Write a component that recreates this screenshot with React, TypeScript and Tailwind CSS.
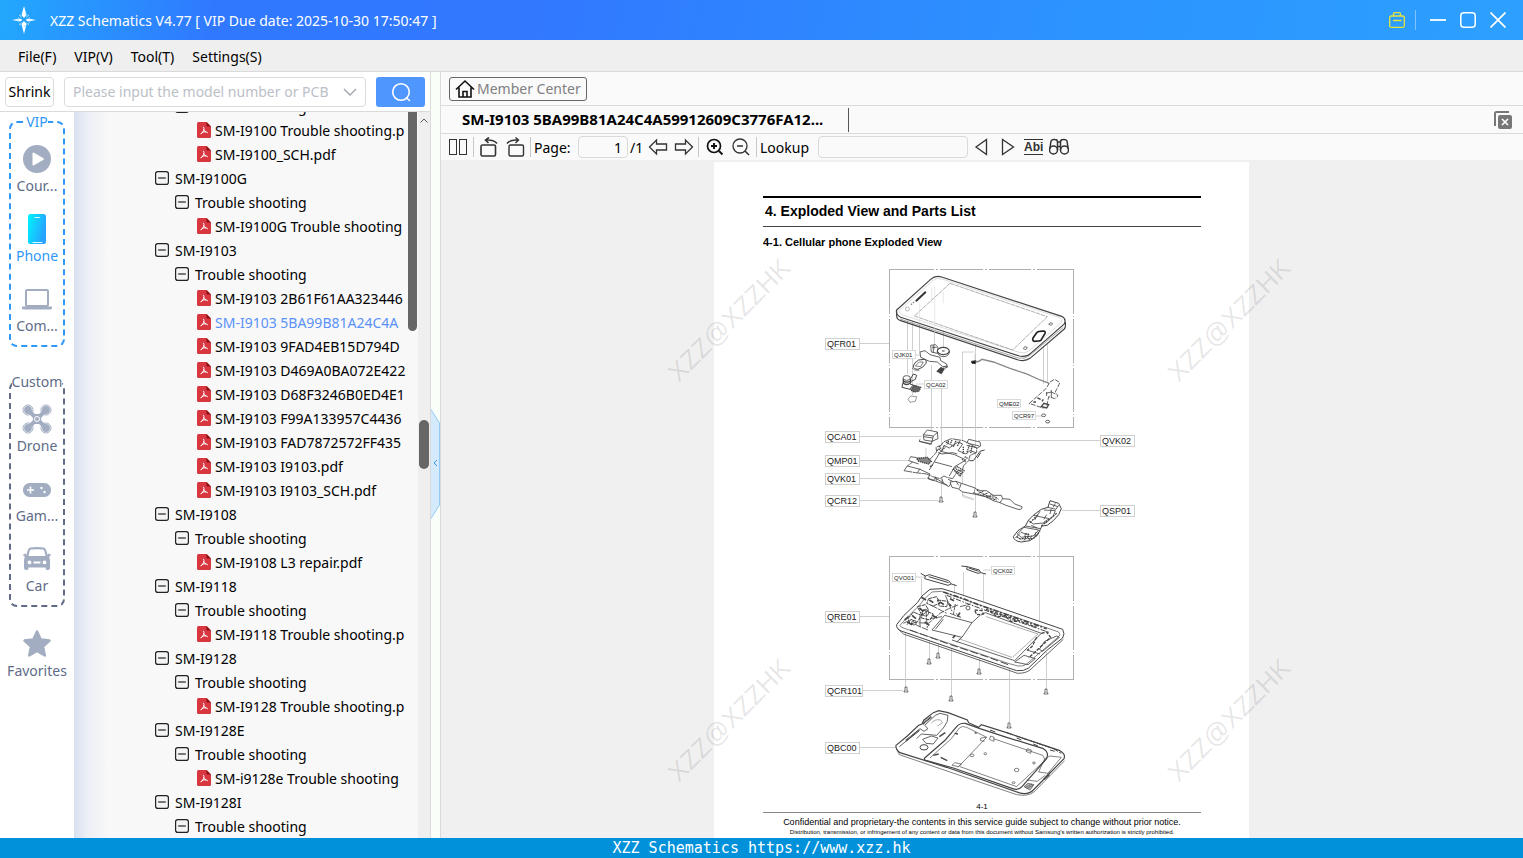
import type { ReactNode } from "react"

type TreeRow = { level: number; text: string; active?: boolean }

const treeRows: TreeRow[] = [
  { level: 1, text: "Trouble shooting" },
  { level: 2, text: "SM-I9100 Trouble shooting.p" },
  { level: 2, text: "SM-I9100_SCH.pdf" },
  { level: 0, text: "SM-I9100G" },
  { level: 1, text: "Trouble shooting" },
  { level: 2, text: "SM-I9100G Trouble shooting" },
  { level: 0, text: "SM-I9103" },
  { level: 1, text: "Trouble shooting" },
  { level: 2, text: "SM-I9103 2B61F61AA323446" },
  { level: 2, text: "SM-I9103 5BA99B81A24C4A", active: true },
  { level: 2, text: "SM-I9103 9FAD4EB15D794D" },
  { level: 2, text: "SM-I9103 D469A0BA072E422" },
  { level: 2, text: "SM-I9103 D68F3246B0ED4E1" },
  { level: 2, text: "SM-I9103 F99A133957C4436" },
  { level: 2, text: "SM-I9103 FAD7872572FF435" },
  { level: 2, text: "SM-I9103 I9103.pdf" },
  { level: 2, text: "SM-I9103 I9103_SCH.pdf" },
  { level: 0, text: "SM-I9108" },
  { level: 1, text: "Trouble shooting" },
  { level: 2, text: "SM-I9108 L3 repair.pdf" },
  { level: 0, text: "SM-I9118" },
  { level: 1, text: "Trouble shooting" },
  { level: 2, text: "SM-I9118 Trouble shooting.p" },
  { level: 0, text: "SM-I9128" },
  { level: 1, text: "Trouble shooting" },
  { level: 2, text: "SM-I9128 Trouble shooting.p" },
  { level: 0, text: "SM-I9128E" },
  { level: 1, text: "Trouble shooting" },
  { level: 2, text: "SM-i9128e Trouble shooting" },
  { level: 0, text: "SM-I9128I" },
  { level: 1, text: "Trouble shooting" },
]

const indents = ["pl-[81px]", "pl-[101px]", "pl-[123px]"]

function StarLogo() {
  return (
    <svg width="24" height="30" viewBox="0 0 24 30" fill="#fff" aria-hidden="true">
      <path d="M12 1L14.500 10L12 13L9.500 10ZM12 29L14.500 19L12 16L9.500 19ZM0 15L8 13.500L10.500 15L8 16.500ZM24 15L16 13.500L13.500 15L16 16.500Z" />
      <path d="M7 10L10 12.500M17 10L14 12.500M7 20L10 17.500M17 20L14 17.500" stroke="#8fd4ff" strokeWidth="1" />
      <path d="M6 15A6 6 0 0 1 12 9A6 6 0 0 1 18 15A6 6 0 0 1 12 21A6 6 0 0 1 6 15" fill="none" stroke="#8fd4ff" strokeWidth=".8" strokeDasharray="3 2" />
    </svg>
  )
}

function MinusBox() {
  return (
    <svg width="14" height="14" viewBox="0 0 14 14" fill="none" stroke="#222" strokeWidth="1.200" className="shrink-0" aria-hidden="true">
      <rect x=".6" y=".6" width="12.800" height="12.800" rx="2.200" fill="#f4f4f4" />
      <path d="M3.200 7H10.800" />
    </svg>
  )
}

function PdfIcon() {
  return (
    <svg width="14" height="16" viewBox="0 0 14 16" className="shrink-0" aria-hidden="true">
      <path d="M1.500 0H9.500L14 4.500V14.500Q14 16 12.500 16H1.500Q0 16 0 14.500V1.500Q0 0 1.500 0Z" fill="#d8373f" />
      <path d="M9.500 0L14 4.500H10.500Q9.500 4.500 9.500 3.500Z" fill="#8f1016" />
      <path d="M6.500 5Q7.500 6 6.700 8.300Q5.800 10.500 3.800 12Q4.800 10.200 7 9.800Q9.500 9.500 10.500 10.500M6.900 8Q7.500 9.300 9 10.200" fill="none" stroke="#fff" strokeWidth="1" strokeLinecap="round" />
    </svg>
  )
}

function CourseIcon() {
  return (
    <svg width="30" height="30" viewBox="0 0 30 30" aria-hidden="true">
      <circle cx="15" cy="15" r="14" fill="#a3adc2" />
      <path d="M10.500 9.500Q10.500 8 12 8.700L21.500 14.200Q22.500 15 21.500 15.700L12 21.200Q10.500 22 10.500 20.500Z" fill="#fff" />
    </svg>
  )
}

function PhoneIcon() {
  return (
    <svg width="30" height="30" viewBox="0 0 30 30" aria-hidden="true">
      <defs>
        <linearGradient id="phoneFill" x1="0" x2="1" y1="0" y2=".4">
          <stop offset="0" stopColor="#00f5ff" />
          <stop offset="1" stopColor="#27a2ff" />
        </linearGradient>
      </defs>
      <rect x="6" y="0" width="18" height="30" rx="2.500" fill="url(#phoneFill)" />
      <path d="M13 3.500H17.500M11 28.500H20" stroke="#d8fbff" strokeWidth="1" strokeLinecap="round" />
    </svg>
  )
}

function LaptopIcon() {
  return (
    <svg width="30" height="30" viewBox="0 0 30 30" aria-hidden="true">
      <rect x="4" y="6" width="22" height="16" rx="1" fill="none" stroke="#a3adc2" strokeWidth="2" />
      <path d="M0 22.500H30V24Q30 25.500 28.500 25.500H1.500Q0 25.500 0 24Z" fill="#a3adc2" />
    </svg>
  )
}

function DroneIcon() {
  return (
    <svg width="30" height="30" viewBox="0 0 30 30" fill="#a3adc2" aria-hidden="true">
      <g stroke="#a3adc2" strokeWidth="1">
        <circle cx="6" cy="6" r="5" fill="#fff" />
        <circle cx="24" cy="6" r="5" fill="#fff" />
        <circle cx="6" cy="24" r="5" fill="#fff" />
        <circle cx="24" cy="24" r="5" fill="#fff" />
      </g>
      <circle cx="6" cy="6" r="3.900" />
      <circle cx="24" cy="6" r="3.900" />
      <circle cx="6" cy="24" r="3.900" />
      <circle cx="24" cy="24" r="3.900" />
      <path d="M6 6L12 12M24 6L18 12M6 24L12 18M24 24L18 18" stroke="#a3adc2" strokeWidth="4" />
      <path d="M10 10H20L19 15L20 20H10L11 15Z" />
      <circle cx="15" cy="15" r="2.500" fill="#a3adc2" stroke="#fff" strokeWidth="1" />
    </svg>
  )
}

function GameIcon() {
  return (
    <svg width="30" height="30" viewBox="0 0 30 30" aria-hidden="true">
      <rect x="1" y="9" width="28" height="14" rx="6.500" fill="#a3adc2" />
      <path d="M8.500 12.500V19.500M5 16H12" stroke="#fff" strokeWidth="1.600" />
      <circle cx="19.500" cy="14" r="1.200" fill="#fff" />
      <circle cx="22.500" cy="18" r="1.200" fill="#fff" />
    </svg>
  )
}

function CarIcon() {
  return (
    <svg width="30" height="30" viewBox="0 0 30 30" fill="#a3adc2" aria-hidden="true">
      <path fillRule="evenodd" d="M8 3.500Q15 2.500 22 3.500Q23.500 4 24.200 6L25.600 11Q28 13 28 16V24Q28 26 26 26H25Q23.500 26 23.500 23.500H6.500Q6.500 26 5 26H4Q2 26 2 24V16Q2 13 4.400 11L5.800 6Q6.500 4 8 3.500ZM9 5.500Q8 5.700 7.600 7L6.500 12H23.500L22.400 7Q22 5.700 21 5.500Q15 4.800 9 5.500ZM7.500 16.500A1.900 1.900 0 1 0 7.500 20.300A1.900 1.900 0 1 0 7.500 16.500ZM22.500 16.500A1.900 1.900 0 1 0 22.500 20.300A1.900 1.900 0 1 0 22.500 16.500ZM11.500 17.500V19.500H18.500V17.500Z" />
      <path d="M1 10.500L4 9.500L5 13L2 12.500ZM29 10.500L26 9.500L25 13L28 12.500Z" />
    </svg>
  )
}

function FavoriteIcon() {
  return (
    <svg width="30" height="30" viewBox="0 0 30 30" aria-hidden="true">
      <path d="M15 2.500L18.700 10.500L27.500 11.500L21 17.500L22.800 26.500L15 22L7.200 26.500L9 17.500L2.500 11.500L11.300 10.500Z" fill="#a3adc2" stroke="#a3adc2" strokeWidth="2.500" strokeLinejoin="round" />
    </svg>
  )
}

function SideItem({ icon, label, active }: { icon: ReactNode; label: string; active?: boolean }) {
  return (
    <button className="flex h-[70px] w-full flex-col items-center pt-3">
      {icon}
      <span className={`whitespace-nowrap text-[14px] leading-6 ${active ? "text-[#2f97f7]" : "text-[#606b88]"}`}>{label}</span>
    </button>
  )
}

function Separator() {
  return <span className="h-5 w-px shrink-0 bg-[#c8c8c8]" />
}

function ToolButton({ label, children }: { label: string; children: ReactNode }) {
  return (
    <button aria-label={label} className="flex shrink-0 items-center justify-center">
      <svg width="20" height="20" viewBox="0 0 20 20" fill="none" stroke="#333" strokeWidth="1.300">
        {children}
      </svg>
    </button>
  )
}

// Part callouts: box position, box width, text
const bigLabels: [number, number, number, string][] = [
  [825, 338, 35, "QFR01"],
  [825, 431, 35, "QCA01"],
  [825, 455, 35, "QMP01"],
  [825, 473, 35, "QVK01"],
  [825, 495, 35, "QCR12"],
  [1100, 435, 35, "QVK02"],
  [1100, 505, 35, "QSP01"],
  [825, 611, 35, "QRE01"],
  [825, 685, 38, "QCR101"],
  [825, 742, 35, "QBC00"],
]

const smallLabels: [number, number, string][] = [
  [892, 350, "QJK01"],
  [924, 380, "QCA02"],
  [997, 399, "QME02"],
  [1012, 411, "QCR97"],
  [892, 573, "QVO01"],
  [991, 566, "QCK02"],
]

// Screws at the end of the assembly lines
const screws: [number, number][] = [
  [941, 500], [975, 515], [929, 662], [938, 656], [979, 672],
  [906, 690], [951, 699], [1046, 692], [1009, 726],
]

function ExplodedView() {
  return (
    <svg viewBox="763 262 438 540" className="block w-full" fill="none" stroke="#444" strokeWidth="1" role="img" aria-label="Cellular phone exploded view">
      <g stroke="#b0b0b0">
        <rect x="889.500" y="269.500" width="184" height="158" />
        <rect x="889.500" y="556.500" width="184" height="123" />
      </g>
      <g stroke="#fff" strokeWidth="2">
        <path d="M934 269.500H940M983 269.500H989M1031 269.500H1037M934 427.500H940M983 427.500H989M1031 427.500H1037" strokeDasharray="2 2" />
        <path d="M934 556.500H940M983 556.500H989M1031 556.500H1037M934 679.500H940M983 679.500H989M1031 679.500H1037" strokeDasharray="2 2" />
        <path d="M889.500 314V319M1073.500 314V319M889.500 363V368M1073.500 363V368M889.500 412V417M1073.500 412V417M889.500 601V606M1073.500 601V606M889.500 650V655M1073.500 650V655" strokeDasharray="2 1" />
      </g>
      <g stroke="#c4c4c4" strokeWidth=".8">
        <path d="M860 343.500H889M860 436.500H922M860 460.500H910M860 478.500H926M860 500.500H938M978 440.500H1100M1062 510.500H1100M860 616.500H889M863 690.500H903M860 747.500H896" />
        <path d="M907.500 312V374M912.500 314V395M919.500 302V352M931.500 365V432M934.500 286V350M943.500 294V348M941.500 382V498M962.500 352V495M975.500 344V512M962 352H974M975 354V360M1043.500 346V384M1047.500 344V382M926 448V460" />
        <path d="M1039.500 535V628M921.500 578V606M954.500 584V640M963.500 572V608M983.500 574V612M905.500 628V688M951.500 640V697M929.500 636V660M938.500 632V654M979.500 610V670M1009.500 648V723M1046.500 652V690M914 355H920M916 384H924M1032 404H1028M1036 416H1042M983 570H991M915 577H925M962 495L974 499" />
      </g>

      {/* Front panel */}
      <g transform="translate(880 260) scale(.3333)">
        <path d="M50 150L152 58Q166 45 185 51L545 169Q560 176 553 192L452 280Q438 293 418 288L62 172Q46 164 50 150Z" fill="#fff" strokeWidth="3.500" />
        <path d="M50 154V168Q50 178 62 182L415 300Q436 305 450 295L553 207Q558 202 556 186" strokeWidth="3.500" />
        <path d="M60 177L415 294Q433 298 447 288L550 202" stroke="#777" strokeWidth="2" />
        <path d="M58 152L158 62Q170 52 186 57L540 173Q550 178 544 188L448 272Q436 282 420 278L66 164Q56 160 58 152Z" stroke="#bbb" strokeWidth="1.500" />
        <path d="M210 70L502 170L398 270L103 168Z" stroke="#888" strokeWidth="2" strokeDasharray="14 2" />
        <path d="M109 122L136 97" stroke="#333" strokeWidth="6" strokeLinecap="round" />
        <circle cx="82" cy="147" r="6" stroke="#999" strokeWidth="2" />
        <path d="M93 134L96 131M99 129L102 126" stroke="#888" strokeWidth="4" />
        <path d="M459 234L470 218Q473 214 479 214L492 213Q497 214 495 220L484 239Q481 243 475 243L463 244Q456 242 459 234Z" stroke="#222" strokeWidth="5" />
        <path d="M506 193L510 188L518 190L514 196ZM430 266L434 260L442 262L438 269Z" stroke="#777" strokeWidth="3" />
        <path d="M119 130V190M155 82V130M164 78V220M190 95V130" stroke="#ddd" strokeWidth="2" />
      </g>

      {/* Camera, jack and key modules */}
      <g transform="translate(880 260) scale(.3333)" strokeWidth="2.500">
        <path d="M120 276L135 272L150 284L180 292L182 302L200 312L202 322L188 320L172 306L148 304L122 292Z" fill="#fff" />
        <path d="M152 256L166 254L174 262L172 280L154 276ZM156 262H170M160 256V278" />
        <ellipse cx="190" cy="273" rx="18" ry="11" fill="#fff" strokeWidth="3.500" />
        <path d="M172 274Q174 290 192 290Q208 288 208 274" />
        <path d="M186 273H194" strokeWidth="3" />
        <path d="M100 318Q102 308 116 300L134 298Q142 302 138 310Q130 324 114 328Q100 328 100 318Z" strokeWidth="3" />
        <path d="M106 318L118 306H130L122 320ZM96 324L104 330L118 331" strokeWidth="2" />
        <path d="M170 334L182 322L194 326L184 342Z" fill="#444" strokeDasharray="4 2" />
        <path d="M190 320L202 318L196 326" />
        <ellipse cx="80" cy="354" rx="11" ry="7" fill="#fff" />
        <path d="M70 356V370Q80 378 92 368V356M72 364Q82 370 92 362" strokeWidth="4" />
        <path d="M92 356L100 342L110 346L106 358L94 364M68 370L66 382L90 388L98 376M90 372L112 380L120 388" strokeWidth="3" />
        <path d="M92 390L102 376L122 382L116 394L102 396Z" fill="#666" strokeWidth="4" strokeDasharray="4 2" />
        <path d="M84 418L92 408L110 410L106 424L90 427Z" stroke="#666" strokeWidth="2" />
        <path d="M274 304L288 302L286 311L276 310Z" fill="#111" strokeWidth="3" />
        <path d="M288 306Q298 306 306 298L340 306L390 325L440 342L480 360L508 370" stroke="#888" strokeWidth="4" />
        <path d="M448 430L498 386L510 366L524 358L540 368L530 388L526 396L534 408L524 416L506 410L500 442L488 444Z" fill="#fff" strokeDasharray="14 4" />
        <path d="M498 400L514 396L526 402M500 396V408M514 390V414" />
        <path d="M484 440L492 430L506 434L500 444ZM460 426H468M472 414L482 418M486 424L490 418" strokeWidth="4" />
        <ellipse cx="491" cy="466" rx="6" ry="4" />
        <ellipse cx="503" cy="485" rx="6" ry="4" />
      </g>

      {/* Main board and speaker */}
      <g transform="translate(820 420) scale(.3333)" strokeWidth="2.500">
        <path d="M310 44L322 30L352 36L354 56L336 64L312 60ZM310 44L340 48L354 36M340 48L336 64M312 50L338 54M298 64L336 72M300 58L298 64L332 73L338 62" fill="#fff" />
        <path d="M252 152L262 138L278 126L266 122L272 110L296 114L330 118L350 96L348 82L364 76L370 66L394 56L430 62L446 70L470 84L470 98L450 106L446 122L430 138L428 150L414 152L398 176L380 172L372 168L360 176L338 170L320 162L286 158Z" fill="#fff" strokeDasharray="26 2" />
        <path d="M290 116L322 112L334 124L326 132L296 124Z" fill="#888" strokeWidth="4" strokeDasharray="4 2" />
        <path d="M328 150L362 94L404 104L438 120L404 140L388 168M344 126L396 140M354 98L366 102L398 98L412 102M366 92L372 76L388 84L414 66L428 72L414 92L438 102L450 92L468 98" />
        <path d="M400 148L412 140L432 152L420 168ZM404 152L424 162M408 147L428 157M356 88L366 92L376 80M378 66L404 80M430 80V104M448 76L440 100M456 78L452 100M350 92L362 84L356 76M338 134L330 140M386 62L380 74M396 60L392 70M408 62L402 76M420 64L412 78M434 110L444 116M426 118L438 126" strokeWidth="4" strokeDasharray="4 2" />
        <path d="M440 70L446 58L480 66L482 78L472 84L440 76M444 70L478 78" />
        <path d="M494 90L480 94L472 106L460 122L448 122M482 98L472 114" strokeWidth="3" />
        <path d="M262 138L300 148L330 162M278 126L296 132M300 146L292 158M330 162L324 176L340 182L346 174L372 190L386 200L398 184L384 178M322 174L382 196M346 170L350 182M366 176L370 190" />
        <path d="M390 186L408 184L424 190L466 204L462 222L428 216L414 206L396 202ZM424 190L418 206M408 184L416 196" fill="#fff" />
        <path d="M466 206L482 212L500 212L520 226L544 226L548 236L570 238L584 252L606 260Q608 270 594 268L558 256L540 248L520 242L496 230L462 222" fill="#fff" />
        <path d="M470 210L498 226L520 232M476 220L490 214M486 226L506 218M500 232L514 224L536 238M520 242L530 232M540 248L548 236M460 218L530 240" strokeWidth="3" strokeDasharray="8 2" />
        <path d="M428 220V230L462 240" stroke="#bbb" strokeWidth="2" />
        <path d="M580 350L594 332L616 318L626 300L640 286L664 268L684 262L690 242L716 250L724 266L716 284L700 302L682 316L666 318L652 346L630 362L604 366Q582 364 580 350Z" fill="#fff" strokeWidth="3" />
        <path d="M592 342L612 322L656 330L640 348L604 352ZM626 302L640 312L680 308L700 288L706 272L672 270M640 286L688 296L672 306M660 274L644 300M684 262L708 268L716 256M690 252L714 260M634 316L652 324M602 336L626 346M586 354L600 340M612 362L618 350M628 360L636 346M644 350L648 336M680 284L672 298M694 266L690 282M706 250L700 262M616 318L662 326" />
        <path d="M620 340A6 6 0 1 0 621 340M596 356L640 356L660 334M664 318L710 280M590 350L606 360M630 308L654 284" strokeWidth="4" strokeDasharray="6 3" />
      </g>

      {/* Rear frame */}
      <g transform="translate(880 550) scale(.3333)" strokeWidth="2.500">
        <path d="M50 224L72 196L112 158L126 138L150 118L186 116L232 130L310 156L548 238Q556 252 548 264L502 300L446 354Q434 364 410 362L380 352L66 244Q48 238 50 224Z" fill="#fff" strokeWidth="3" />
        <path d="M60 226L80 204L120 164L134 146L156 126L184 124L240 144L320 172L536 246Q544 254 536 260L440 342Q430 350 414 348L384 340L76 236Q60 232 60 226Z" strokeWidth="2" />
        <path d="M54 236L70 252L384 360L412 370Q438 370 450 360L550 268" />
        <path d="M190 126L250 146L300 166L500 236" strokeWidth="5" strokeDasharray="16 5 5 6" />
        <path d="M200 136L260 160L330 186L510 248" strokeWidth="3" strokeDasharray="16 5 5 4" />
        <path d="M302 196L316 188L484 250L404 332L216 270" strokeWidth="2.500" />
        <path d="M318 200L474 252L398 322M236 266L396 322" stroke="#888" strokeWidth="2" />
        <path d="M194 196L276 218L246 262L156 240ZM276 218L300 196M246 262L230 276M190 208L166 238" />
        <path d="M84 206L100 186L124 196L112 216L90 222ZM112 170L136 164L146 180L126 196ZM130 180L160 192L150 210L124 204ZM146 146L170 140L180 160L158 168L140 160ZM172 150L204 154L200 170L178 168Z" strokeWidth="3" strokeDasharray="12 2" />
        <path d="M70 220L96 208L110 226L144 240M116 218L146 220L180 190L206 176L236 164M150 206L186 200M120 196V230M138 182L142 234M92 208L80 226M154 166L200 190M196 136L216 184M226 162L220 194M240 170L272 162M210 190L242 202L228 190" strokeDasharray="20 3" />
        <path d="M82 216L96 224M96 196L108 206M118 174L130 184M148 150L160 158M180 156L192 164M134 216L148 226M156 196L172 204M124 142L138 150M74 210L86 200M232 200L240 188M218 264L226 256M210 146L222 152M206 162L214 168" strokeWidth="5" />
        <circle cx="136" cy="188" r="10" />
        <circle cx="102" cy="218" r="7" />
        <circle cx="264" cy="174" r="6" />
        <path d="M284 180L306 182L310 192L290 194ZM318 178L360 192L400 206L470 232M330 184L350 200L376 198L392 214L420 214M484 250L500 246L512 262L446 324M470 262L456 290L442 300" strokeWidth="4" strokeDasharray="10 4" />
        <path d="M494 274L530 258L538 262L488 304L478 298ZM432 316L466 326L444 344L404 336ZM440 300L480 312" />
        <path d="M90 240L200 280L320 320L390 346" strokeWidth="3" strokeDasharray="24 8" />
        <path d="M122 70L136 78L148 74L206 92L214 102L230 107M136 78L134 86L204 106L214 102M146 80L206 98" strokeWidth="3" />
        <path d="M244 48L262 50L298 60L302 68L318 72M262 50L260 58L294 70L302 68M266 54L296 64" strokeWidth="3" />
      </g>

      {/* Battery cover */}
      <g transform="translate(820 680) scale(.3333)" strokeWidth="2.500">
        <path d="M228 196L262 168L296 136L306 132L312 120L340 98L356 92L384 98L442 120L446 128L476 142L484 134L560 158L720 212Q738 222 732 236L640 330Q624 346 596 338L380 262L240 218Q226 208 228 196Z" fill="#fff" strokeWidth="3.500" />
        <path d="M230 208L238 224L378 272L590 344Q624 350 642 336L734 242" strokeWidth="2" />
        <path d="M238 200L270 174L300 146L312 154L324 146L314 136L346 106L360 100L384 106M384 106Q386 126 370 144L350 166L304 162L290 176" />
        <path d="M314 234L376 180L410 140Q420 128 436 130L480 146L560 172L670 206Q688 216 680 236L606 320Q596 332 578 326L400 264L320 242Q310 240 314 234Z" strokeWidth="3.500" />
        <path d="M330 234L394 176L418 144Q426 136 440 142L500 172L414 262M520 176L668 226L676 240L590 320L420 260M500 172L482 174V182L494 184M508 178L512 168L522 172V184ZM618 214L622 206L634 210L632 220ZM396 256L404 248L424 252L416 260Z" strokeWidth="2" />
        <path d="M560 158L700 206L724 220M510 150L526 156M590 174L604 180M640 192L654 198M690 210L704 214" strokeWidth="3" strokeDasharray="20 4" />
        <path d="M674 236L690 228L724 232L684 280L656 276ZM620 300L652 304L676 286M690 274L676 292" strokeWidth="2" />
        <path d="M612 320L624 310L642 314L630 330ZM616 322L636 312M620 326L640 316" fill="#bbb" strokeWidth="2" />
        <path d="M672 298L688 284M258 182L298 150M308 132L334 110" strokeWidth="6" strokeDasharray="4 1" />
        <path d="M308 178L334 168L354 174L340 192L318 190Z" />
        <ellipse cx="312" cy="202" rx="12" ry="8" strokeWidth="3" />
        <path d="M358 170L376 158M340 226L356 222M362 232L382 242M404 160L414 162M464 158L470 160" strokeWidth="4" />
        <path d="M334 130Q344 116 362 120L368 128L352 138" stroke="#999" />
        <g strokeWidth="2">
          <ellipse cx="496" cy="221" rx="4" ry="3" />
          <ellipse cx="590" cy="270" rx="7" ry="5" />
          <ellipse cx="642" cy="249" rx="4" ry="3" />
          <ellipse cx="581" cy="308" rx="4" ry="3" />
          <ellipse cx="456" cy="226" rx="6" ry="4" />
        </g>
      </g>

      {screws.map(([x, y]) => (
        <path key={`${x}-${y}`} d={`M${x - 1} ${y - 3}H${x + 1}V${y + 1}H${x + 2}V${y + 2}H${x - 2}V${y + 1}H${x - 1}Z`} stroke="#555" strokeWidth=".8" />
      ))}

      <g fontFamily="Liberation Sans, sans-serif">
        {bigLabels.map(([x, y, w, text]) => (
          <g key={text}>
            <rect x={x + 0.5} y={y + 0.5} width={w - 1} height="11" fill="#fff" stroke="#d0d0d0" />
            <text x={x + 2} y={y + 9} fontSize="9" fill="#222" stroke="none">{text}</text>
          </g>
        ))}
        {smallLabels.map(([x, y, text]) => (
          <g key={text}>
            <rect x={x + 0.5} y={y + 0.5} width="23" height="8" fill="#fff" stroke="#d0d0d0" strokeWidth=".8" />
            <text x={x + 2} y={y + 7} fontSize="6" fill="#222" stroke="none">{text}</text>
          </g>
        ))}
      </g>
    </svg>
  )
}

function Watermark({ place }: { place: string }) {
  return (
    <span className={`pointer-events-none absolute w-[180px] -rotate-45 text-center font-['Liberation_Sans',sans-serif] text-[26px] leading-8 text-black/10 ${place}`}>
      XZZ@XZZHK
    </span>
  )
}

function DocumentPage() {
  return (
    <div className="relative mx-auto mt-0.5 w-[535px] bg-white pt-[34px] pr-12 pl-[49px] font-['Liberation_Sans',sans-serif] text-black">
      <h1 className="border-t-2 border-b border-t-black border-b-[#444] pb-0.5 pl-0.5 text-[14px] leading-[26px] font-bold">
        4. Exploded View and Parts List
      </h1>
      <h2 className="pt-[5px] pb-2.5 text-[11px] leading-5 font-bold">4-1. Cellular phone Exploded View</h2>
      <ExplodedView />
      <p className="border-b border-[#888] text-center text-[8px] leading-[10px]">4-1</p>
      <p className="pt-[3px] text-center text-[9px] leading-3 whitespace-nowrap">
        Confidential and proprietary-the contents in this service guide subject to change without prior notice.
      </p>
      <p className="pb-4 text-center text-[6px] leading-[9px] whitespace-nowrap">
        Distribution, transmission, or infringement of any content or data from this document without Samsung's written authorization is strictly prohibited.
      </p>
      <Watermark place="top-[142px] -left-[75px]" />
      <Watermark place="top-[142px] left-[425px]" />
      <Watermark place="top-[542px] -left-[75px]" />
      <Watermark place="top-[542px] left-[425px]" />
    </div>
  )
}

export default function App() {
  return (
    <div className="flex h-screen flex-col overflow-hidden bg-[#fafafa] font-['Noto_Sans',sans-serif] text-[14px] text-black">
      {/* Title bar */}
      <header className="flex h-10 shrink-0 items-center bg-[linear-gradient(100deg,#22a8fd_0%,#3079ff_14%,#3178ff_35%,#2c93ff_70%,#2ca0ff_100%)] pr-[17px] pl-3 text-white">
        <StarLogo />
        <span className="ml-3.5 flex-1">XZZ Schematics V4.77 [ VIP Due date: 2025-10-30 17:50:47 ]</span>
        <div className="flex items-center gap-3.5">
          <button aria-label="Toolbox" className="-mr-1">
            <svg width="16" height="16" viewBox="0 0 16 16" fill="none" stroke="#e4e43c" strokeWidth="1.300">
              <rect x=".7" y="4" width="14.600" height="11.300" rx="1.500" />
              <path d="M4.500 4V2Q4.500 .7 5.800 .7H10.200Q11.500 .7 11.500 2V4M4 8.500H12.500" />
            </svg>
          </button>
          <span className="h-5 w-px bg-white/40" />
          <button aria-label="Minimize">
            <svg width="16" height="16" viewBox="0 0 16 16" stroke="#fff" strokeWidth="1.800"><path d="M0 8H16" /></svg>
          </button>
          <button aria-label="Maximize">
            <svg width="16" height="16" viewBox="0 0 16 16" fill="none" stroke="#fff" strokeWidth="1.500"><rect x=".8" y=".8" width="14.400" height="14.400" rx="3" /></svg>
          </button>
          <button aria-label="Close">
            <svg width="16" height="16" viewBox="0 0 16 16" stroke="#fff" strokeWidth="1.700"><path d="M.5 .5L15.500 15.500M15.500 .5L.5 15.500" /></svg>
          </button>
        </div>
      </header>

      {/* Menu */}
      <nav className="flex h-8 shrink-0 items-center gap-[18px] border-b border-[#dadada] bg-[#efefef] pt-px pl-[18px]">
        <button>File(F)</button>
        <button>VIP(V)</button>
        <button>Tool(T)</button>
        <button>Settings(S)</button>
      </nav>

      <div className="flex min-h-0 flex-1">
        {/* Left panel */}
        <aside className="flex w-[431px] shrink-0 flex-col border-r border-[#dadada]">
          <form className="flex h-10 shrink-0 items-center gap-2.5 border-b border-[#dadada] bg-white px-[5px]">
            <button type="button" className="h-[30px] w-[49px] shrink-0 rounded border border-[#dcdcdc] text-center">Shrink</button>
            <div className="flex h-[30px] min-w-0 flex-1 items-center rounded border border-[#dcdcdc] px-2">
              <input
                aria-label="Model number or PCB"
                placeholder="Please input the model number or PCB"
                className="min-w-0 flex-1 outline-none placeholder:text-[#bcc0c8]"
              />
              <button type="button" aria-label="Show history" className="ml-1.5">
                <svg width="14" height="14" viewBox="0 0 14 14" fill="none" stroke="#a0a4ac" strokeWidth="1.400"><path d="M1 4L7 10L13 4" /></svg>
              </button>
            </div>
            <button type="submit" aria-label="Search" className="flex h-[30px] w-[49px] shrink-0 items-center justify-center rounded-[3px] bg-[#5096ff]">
              <svg width="20" height="20" viewBox="0 0 20 20" fill="none" stroke="#fff" strokeWidth="1.600" strokeLinecap="round">
                <circle cx="10" cy="10" r="8.300" />
                <path d="M15.500 16L18.500 18.500" />
              </svg>
            </button>
          </form>

          <div className="flex min-h-0 flex-1">
            <div className="w-[74px] shrink-0 overflow-hidden bg-white">
              <fieldset className="mx-[9px] min-w-0 rounded-lg border-2 border-dashed border-[#2f97f7] pb-[3px]">
                <legend className="mx-auto text-[14px] leading-5 text-[#2f97f7]">VIP</legend>
                <SideItem icon={<CourseIcon />} label="Cour..." />
                <SideItem icon={<PhoneIcon />} label="Phone" active />
                <SideItem icon={<LaptopIcon />} label="Com..." />
              </fieldset>
              <fieldset className="mx-[9px] mt-[25px] min-w-0 rounded-lg border-2 border-dashed border-[#606b88] pb-[3px]">
                <legend className="mx-auto text-[14px] leading-5 text-[#606b88]">Custom</legend>
                <SideItem icon={<DroneIcon />} label="Drone" />
                <SideItem icon={<GameIcon />} label="Gam..." />
                <SideItem icon={<CarIcon />} label="Car" />
              </fieldset>
              <div className="pt-2.5">
                <SideItem icon={<FavoriteIcon />} label="Favorites" />
              </div>
            </div>

            <div className="flex min-w-0 flex-1 bg-[linear-gradient(90deg,#d8e1f1_0px,#eceff5_14px,#f8f8f8_34px)]">
              <ul className="-mt-[18px] min-w-0 flex-1 overflow-hidden [clip-path:inset(18px_0_0_0)]">
                {treeRows.map((row, i) => (
                  <li key={i} className={`${indents[row.level]} h-6`}>
                    <button className={`flex h-6 w-full items-center overflow-hidden whitespace-nowrap ${row.level === 2 ? "gap-1" : "gap-1.5"} ${row.active ? "text-[#5a92f8]" : ""}`}>
                      {row.level === 2 ? <PdfIcon /> : <MinusBox />}
                      <span>{row.text}</span>
                    </button>
                  </li>
                ))}
              </ul>
              <div className="w-3 shrink-0 pl-0.5">
                <div className="h-[219px] w-[9px] rounded-b-full bg-[#666]" />
              </div>
              <div className="flex w-3 shrink-0 flex-col items-center bg-[#efefef] pt-1.5">
                <svg width="8" height="5" viewBox="0 0 8 5" fill="none" stroke="#555" aria-hidden="true"><path d="M.5 4.500L4 1L7.500 4.500" /></svg>
                <div className="mt-[297px] h-[49px] w-2.5 rounded-full bg-[#666]" />
              </div>
            </div>
          </div>
        </aside>

        {/* Splitter */}
        <div className="flex w-2.5 shrink-0 items-center border-r border-[#dadada] bg-[#f9fff8] pt-[18px]">
          <button aria-label="Collapse panel">
            <svg width="9" height="110" viewBox="0 0 9 110" fill="#d6eafd" stroke="#93cbf8" aria-hidden="true">
              <path d="M0 .5L8.500 14V96L0 109.500" />
              <path d="M6 51L3 54L6 57" fill="none" stroke="#3f9af0" />
            </svg>
          </button>
        </div>

        {/* Document viewer */}
        <main className="flex min-w-0 flex-1 flex-col">
          <div className="flex h-[34px] shrink-0 items-center border-b border-[#dadada] pl-2">
            <button className="flex h-6 items-center gap-0.5 rounded-[3px] border border-[#666] px-[5px] text-[#808080]">
              <svg width="20" height="20" viewBox="0 0 20 20" fill="none" stroke="#111" strokeWidth="1.600" aria-hidden="true">
                <path d="M1 10.500L10 2L19 10.500M4 8.500V18H16V8.500M8 18V12.500H12V18" />
              </svg>
              Member Center
            </button>
          </div>

          <div className="flex h-7 shrink-0 items-center border-b border-[#dadada] pr-[11px]">
            <button className="flex h-6 w-[408px] items-center border-r border-[#555] pl-[21px] text-[15px] font-bold whitespace-nowrap">
              SM-I9103 5BA99B81A24C4A59912609C3776FA12...
            </button>
            <button aria-label="Close all tabs" className="ml-auto">
              <svg width="18" height="18" viewBox="0 0 18 18" fill="none" aria-hidden="true">
                <path d="M1 15V2.500Q1 1 2.500 1H15" stroke="#777" strokeWidth="2" />
                <rect x="4" y="4" width="14" height="14" rx="2" fill="#777" />
                <path d="M8 8L14 14M14 8L8 14" stroke="#fff" strokeWidth="1.700" />
              </svg>
            </button>
          </div>

          <div className="flex h-[26px] shrink-0 items-center pl-[7px]">
            <ToolButton label="Two pages">
              <rect x="1.500" y="2.500" width="7" height="15" strokeWidth="1" />
              <rect x="11.500" y="2.500" width="7" height="15" strokeWidth="1" />
            </ToolButton>
            <span className="w-[5px]" />
            <Separator />
            <span className="w-[5px]" />
            <ToolButton label="Rotate left">
              <rect x="2" y="8" width="14.500" height="11" rx="1.500" strokeWidth="1.600" />
              <path d="M18 6.500Q15 2.500 7 3M10 .5L6.500 3L9.500 6" strokeWidth="1.600" />
            </ToolButton>
            <span className="w-1.5" />
            <ToolButton label="Rotate right">
              <rect x="4" y="8" width="14.500" height="11" rx="1.500" strokeWidth="1.400" />
              <path d="M2 6.500Q5 2.500 13 3M10.500 .5L13.500 3L10.500 6" strokeWidth="1.400" />
            </ToolButton>
            <span className="w-[5px]" />
            <Separator />
            <label htmlFor="page" className="ml-[3px] w-11">Page:</label>
            <input id="page" defaultValue="1" className="h-[22px] w-[50px] rounded-sm border border-[#dadada] pr-[5px] text-right" />
            <span className="ml-0.5 w-[18px]">/1</span>
            <ToolButton label="Previous page">
              <path d="M1.500 10L8.500 3V7H18.500V13H8.500V17Z" />
            </ToolButton>
            <span className="w-1.5" />
            <ToolButton label="Next page">
              <path d="M18.500 10L11.500 3V7H1.500V13H11.500V17Z" />
            </ToolButton>
            <span className="w-1" />
            <Separator />
            <span className="w-1.5" />
            <ToolButton label="Zoom in">
              <circle cx="9" cy="9" r="6.500" stroke="#111" strokeWidth="1.700" />
              <path d="M9 6V12M6 9H12M14 14L17.500 17.500" stroke="#111" strokeWidth="1.900" />
            </ToolButton>
            <span className="w-1.5" />
            <ToolButton label="Zoom out">
              <circle cx="9" cy="9" r="7" />
              <path d="M6 9H12M14 14L18 18" strokeWidth="1.600" />
            </ToolButton>
            <span className="w-[5px]" />
            <Separator />
            <label htmlFor="lookup" className="ml-[3px] w-[58px]">Lookup</label>
            <input id="lookup" className="h-[22px] w-[150px] rounded-sm border border-[#dadada]" />
            <span className="w-1" />
            <ToolButton label="Find previous">
              <path d="M14.500 2.500V17.500L4 10Z" />
            </ToolButton>
            <span className="w-1.5" />
            <ToolButton label="Find next">
              <path d="M4.500 2.500V17.500L15.500 10Z" />
            </ToolButton>
            <button className="ml-1.5 h-4 border-y border-[#333] font-['Liberation_Sans',sans-serif] text-[12px] leading-[14px] font-bold text-[#333]">Abi</button>
            <span className="w-1.5" />
            <ToolButton label="Search in document">
              <circle cx="4.500" cy="13" r="4" strokeWidth="1.500" />
              <circle cx="15.500" cy="13" r="4" strokeWidth="1.500" />
              <path d="M.8 12L2 4Q3 2 6 2.500Q8.500 2.500 8.500 5V13M19.200 12L18 4Q17 2 14 2.500Q11.500 2.500 11.500 5V13M8.500 5H11.500M8.500 9.500H11.500" strokeWidth="1.500" />
            </ToolButton>
          </div>

          <div className="min-h-0 flex-1 overflow-hidden bg-[#f0f0f0] pr-px">
            <DocumentPage />
          </div>
        </main>
      </div>

      <footer className="h-5 shrink-0 bg-[#0091da] text-center font-['DejaVu_Sans_Mono',monospace] text-[15px] leading-5 text-white">
        XZZ Schematics https://www.xzz.hk
      </footer>
    </div>
  )
}
